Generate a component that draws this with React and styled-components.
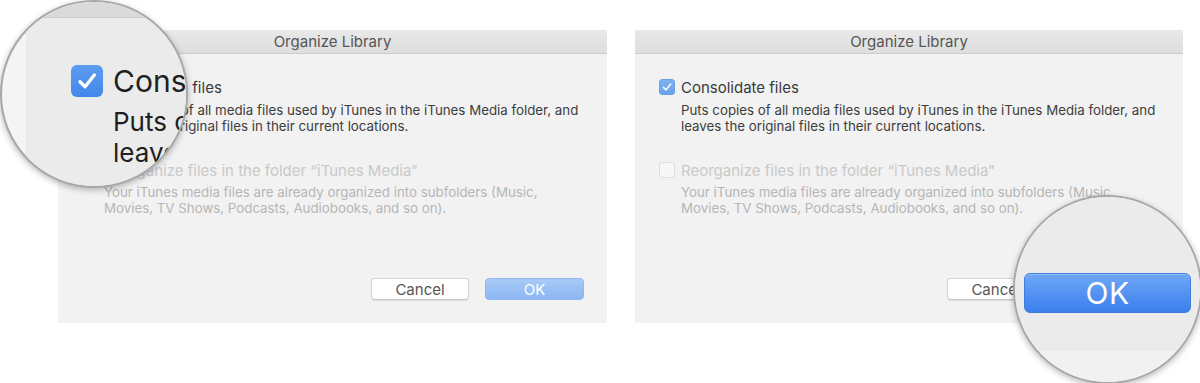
import React from "react";
import styled, { createGlobalStyle } from "styled-components";

const GlobalStyle = createGlobalStyle`
  html, body { margin: 0; padding: 0; background: #ffffff; }
  body { font-family: Inter, "Noto Sans", "Liberation Sans", sans-serif; -webkit-font-smoothing: antialiased; }
  * { box-sizing: border-box; }
`;

const Page = styled.div`
  width: 1200px;
  height: 383px;
  display: flex;
  align-items: flex-start;
  gap: 28px;
  padding: 30px 0 0 58px;
  overflow: hidden;
  position: relative;
`;

const Dialog = styled.div`
  position: relative;
  width: ${(p) => p.$w}px;
  height: 293px;
  background: #f2f2f2;
  display: flex;
  flex-direction: column;
`;

const TitleBar = styled.div`
  height: 24px;
  flex: none;
  display: flex;
  align-items: center;
  justify-content: center;
  background: linear-gradient(#e9e9e9, #dedede);
  border-bottom: 1px solid #cccccc;
  font-size: 15px;
  color: #555555;
`;

const Body = styled.div`
  padding: 25px 0 0 24px;
  display: flex;
  flex-direction: column;
  gap: 28px;
`;

const Option = styled.div`
  display: grid;
  grid-template-columns: 16px 1fr;
  column-gap: 6px;
  align-items: start;
`;

const Box = styled.div`
  width: 16px;
  height: 16px;
  border-radius: 3px;
  display: flex;
  align-items: center;
  justify-content: center;
  background: ${(p) => (p.$checked ? "linear-gradient(#7db0ef, #6aa2ea)" : "#f7f7f7")};
  border: 1px solid ${(p) => (p.$checked ? "#6b9fe2" : "#dedede")};
`;

const Label = styled.div`
  font-size: 15px;
  line-height: 18px;
  white-space: nowrap;
  color: ${(p) => (p.$disabled ? "#c9c9c9" : "#3a3a3a")};
`;

const Desc = styled.div`
  grid-column: 2;
  margin-top: ${(p) => (p.$disabled ? 4 : 5)}px;
  font-size: 13.3px;
  line-height: 16px;
  white-space: nowrap;
  color: ${(p) => (p.$disabled ? "#b6b6b6" : "#3d3d3d")};
`;

const Buttons = styled.div`
  margin-top: auto;
  display: flex;
  justify-content: flex-end;
  gap: 16px;
  padding: 0 23px 23px 0;
`;

const Button = styled.div`
  width: ${(p) => (p.$primary ? 99 : 98)}px;
  height: 22px;
  border-radius: 4px;
  display: flex;
  align-items: center;
  justify-content: center;
  font-size: 15px;
  ${(p) =>
    p.$primary
      ? `background: linear-gradient(#a9cbf7, #8bb6f1); border: 1px solid #92b6ea; color: #ffffff;`
      : `background: #ffffff; border: 1px solid #d6d6d6; border-bottom-color: #c6c6c6; color: #555555; box-shadow: 0 0.5px 1px rgba(0,0,0,0.08);`}
`;

const Magnifier = styled.div`
  position: absolute;
  left: ${(p) => p.$x}px;
  top: ${(p) => p.$y}px;
  width: ${(p) => p.$size}px;
  height: ${(p) => p.$size}px;
  border-radius: 50%;
  overflow: hidden;
  border: 2px solid #a8a8a8;
  box-shadow: 0 2px 6px rgba(0, 0, 0, 0.28);
  background: #f4f4f4;
  z-index: 2;
`;

/* left magnifier */
const MagDialog = styled.div`
  margin-left: 24px;
  height: 100%;
  background: #ebebeb;
  display: flex;
  flex-direction: column;
`;

const MagTitle = styled.div`
  height: 16px;
  flex: none;
  background: #dadada;
  border-bottom: 1px solid #c9c9c9;
`;

const MagOption = styled.div`
  display: grid;
  grid-template-columns: 32px 1fr;
  column-gap: 10px;
  padding: 46px 0 0 45px;
  align-items: start;
`;

const BigBox = styled.div`
  width: 32px;
  height: 32px;
  margin-top: 1px;
  border-radius: 6px;
  background: linear-gradient(#5d9cf0, #4287ea);
  display: flex;
  align-items: center;
  justify-content: center;
`;

const BigLabel = styled.div`
  font-size: 30px;
  line-height: 34px;
  color: #1f1f1f;
  white-space: nowrap;
`;

const BigDesc = styled.div`
  grid-column: 2;
  margin-top: 8px;
  font-size: 26px;
  line-height: 31px;
  color: #1f1f1f;
  white-space: nowrap;
`;

/* right magnifier */
const MagArea = styled.div`
  height: 100%;
  display: flex;
  flex-direction: column;
`;

const MagPanel = styled.div`
  height: 154px;
  background: #ebebeb;
  padding: 76px 0 0 9px;
`;

const MagBelow = styled.div`
  flex: 1;
  background: #f1f1f1;
`;

const BigOK = styled.div`
  width: 167px;
  height: 40px;
  border-radius: 6px;
  background: linear-gradient(#6ea8f6, #3b7fee);
  border: 1px solid #3f7ddf;
  box-shadow: inset 0 1px 0 rgba(255, 255, 255, 0.25);
  display: flex;
  align-items: center;
  justify-content: center;
  color: #ffffff;
  font-size: 30px;
  font-weight: 400;
  letter-spacing: 0.5px;
`;

const Check = ({ size, stroke }) => (
  <svg width={size} height={size} viewBox="0 0 16 16" fill="none">
    <path d="M4 8.4 L6.9 11.3 L12.2 4.6" stroke="#ffffff" strokeWidth={stroke} strokeLinecap="round" strokeLinejoin="round" />
  </svg>
);

const DialogContent = () => (
  <>
    <TitleBar>Organize Library</TitleBar>
    <Body>
      <Option>
        <Box $checked>
          <Check size={14} stroke={1.7} />
        </Box>
        <Label>Consolidate files</Label>
        <Desc>
          Puts copies of all media files used by iTunes in the iTunes Media folder, and
          <br />
          leaves the original files in their current locations.
        </Desc>
      </Option>
      <Option>
        <Box />
        <Label $disabled>Reorganize files in the folder “iTunes Media”</Label>
        <Desc $disabled>
          Your iTunes media files are already organized into subfolders (Music,
          <br />
          Movies, TV Shows, Podcasts, Audiobooks, and so on).
        </Desc>
      </Option>
    </Body>
    <Buttons>
      <Button>Cancel</Button>
      <Button $primary>OK</Button>
    </Buttons>
  </>
);

export default function App() {
  return (
    <>
      <GlobalStyle />
      <Page>
        <Dialog $w={549}>
          <DialogContent />
          <Magnifier $x={-58} $y={-30} $size={188}>
            <MagDialog>
              <MagTitle />
              <MagOption>
                <BigBox>
                  <Check size={28} stroke={1.9} />
                </BigBox>
                <BigLabel>Consolidate files</BigLabel>
                <BigDesc>
                  Puts copies of all media files
                  <br />
                  leaves the original files
                </BigDesc>
              </MagOption>
            </MagDialog>
          </Magnifier>
        </Dialog>
        <Dialog $w={548}>
          <DialogContent />
          <Magnifier $x={378} $y={165} $size={189}>
            <MagArea>
              <MagPanel>
                <BigOK>OK</BigOK>
              </MagPanel>
              <MagBelow />
            </MagArea>
          </Magnifier>
        </Dialog>
      </Page>
    </>
  );
}
